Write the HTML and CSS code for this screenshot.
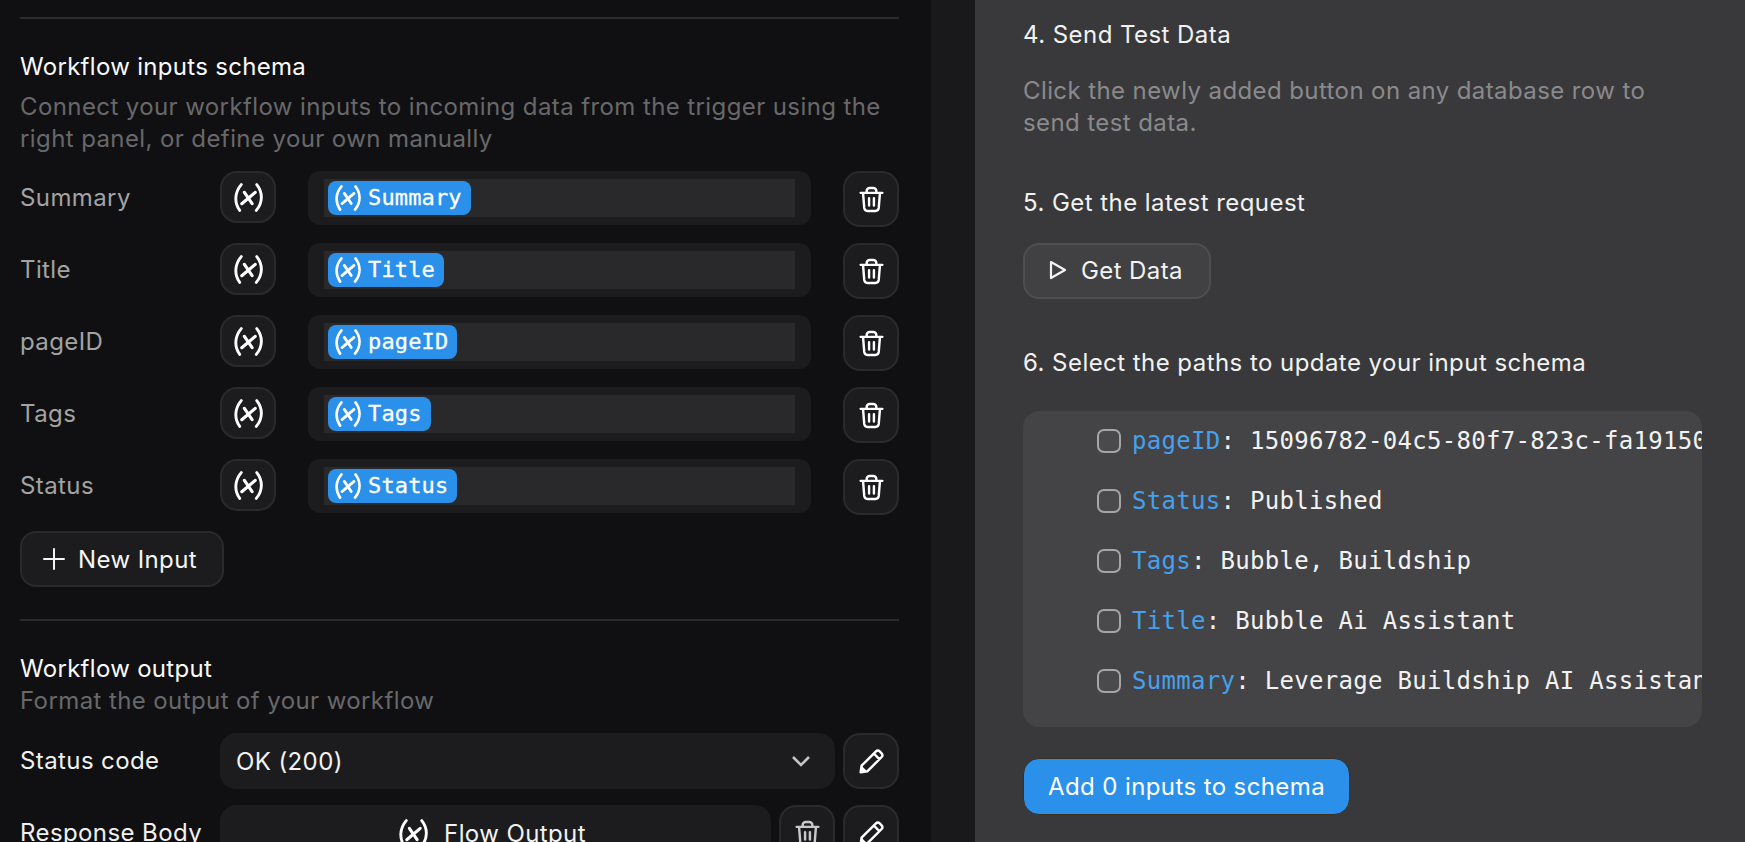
FILE: index.html
```html
<!DOCTYPE html>
<html lang="en">
<head>
    <meta charset="UTF-8">
    <title>Workflow inputs schema</title>
    <link rel="stylesheet" href="styles.css">
</head>
<body>
    <svg class="defs" width="0" height="0">
        <symbol id="trash" viewBox="0 0 24 24">
            <path d="M3 6.500h18M8 6.500V5a2.500 2.500 0 0 1 2.500-2.500h3A2.500 2.500 0 0 1 16 5v1.500M5 6.500l1 12.500a2.800 2.800 0 0 0 2.800 2.500h6.400a2.800 2.800 0 0 0 2.800-2.500l1-12.500M10 11v6M14 11v6" fill="none" stroke="currentColor" stroke-width="2" stroke-linecap="round" stroke-linejoin="round"/>
        </symbol>
        <symbol id="pencil" viewBox="0 0 24 24">
            <path d="M3 21l.8-5.500L15.500 3.800a2.500 2.500 0 0 1 3.500 0l1.200 1.200a2.500 2.500 0 0 1 0 3.500L8.500 20.200z M14 5.500l4.500 4.500" fill="none" stroke="currentColor" stroke-width="2" stroke-linejoin="round"/>
            <path d="M3 21l.8-5.500 4.700 4.700z" fill="currentColor"/>
        </symbol>
        <symbol id="variable" viewBox="0 0 30 28">
            <path d="M8 1.500C1.500 9 1 19 6.500 26.500M23 1.500C29 9 29 19 22.500 26.500" fill="none" stroke="currentColor" stroke-width="2.800" stroke-linecap="round"/>
            <path d="M11 9l7.500 11M21.500 9L8.500 20" fill="none" stroke="currentColor" stroke-width="3" stroke-linecap="round"/>
        </symbol>
    </svg>

    <div class="app">
        <section class="left">
            <hr class="rule rule-top">
            <h2 class="title title-first">Workflow inputs schema</h2>
            <p class="sub">Connect your workflow inputs to incoming data from the trigger using the right panel, or define your own manually</p>

            <div class="rows">
                <div class="row">
                    <span class="label">Summary</span>
                    <button class="icon-btn var-btn"><svg class="var-ico"><use href="#variable"/></svg></button>
                    <div class="field"><div class="field-inner"><span class="chip"><svg class="chip-ico"><use href="#variable"/></svg>Summary</span></div></div>
                    <button class="icon-btn"><svg class="ico"><use href="#trash"/></svg></button>
                </div>
                <div class="row">
                    <span class="label">Title</span>
                    <button class="icon-btn var-btn"><svg class="var-ico"><use href="#variable"/></svg></button>
                    <div class="field"><div class="field-inner"><span class="chip"><svg class="chip-ico"><use href="#variable"/></svg>Title</span></div></div>
                    <button class="icon-btn"><svg class="ico"><use href="#trash"/></svg></button>
                </div>
                <div class="row">
                    <span class="label">pageID</span>
                    <button class="icon-btn var-btn"><svg class="var-ico"><use href="#variable"/></svg></button>
                    <div class="field"><div class="field-inner"><span class="chip"><svg class="chip-ico"><use href="#variable"/></svg>pageID</span></div></div>
                    <button class="icon-btn"><svg class="ico"><use href="#trash"/></svg></button>
                </div>
                <div class="row">
                    <span class="label">Tags</span>
                    <button class="icon-btn var-btn"><svg class="var-ico"><use href="#variable"/></svg></button>
                    <div class="field"><div class="field-inner"><span class="chip"><svg class="chip-ico"><use href="#variable"/></svg>Tags</span></div></div>
                    <button class="icon-btn"><svg class="ico"><use href="#trash"/></svg></button>
                </div>
                <div class="row">
                    <span class="label">Status</span>
                    <button class="icon-btn var-btn"><svg class="var-ico"><use href="#variable"/></svg></button>
                    <div class="field"><div class="field-inner"><span class="chip"><svg class="chip-ico"><use href="#variable"/></svg>Status</span></div></div>
                    <button class="icon-btn"><svg class="ico"><use href="#trash"/></svg></button>
                </div>
            </div>

            <button class="new-input">
                <svg width="22" height="22" viewBox="0 0 22 22"><path d="M11 1v20M1 11h20" stroke="currentColor" stroke-width="2" stroke-linecap="round"/></svg>
                New Input
            </button>

            <hr class="rule rule-mid">
            <h2 class="title title-second">Workflow output</h2>
            <p class="sub sub-output">Format the output of your workflow</p>

            <div class="rows rows-output">
                <div class="row">
                    <span class="label label-light">Status code</span>
                    <div class="select">
                        <span>OK (200)</span>
                        <svg width="20" height="12" viewBox="0 0 20 12"><path d="M2 2l8 8 8-8" fill="none" stroke="#c4c4c4" stroke-width="2.600"/></svg>
                    </div>
                    <button class="icon-btn"><svg class="ico"><use href="#pencil"/></svg></button>
                </div>
                <div class="row">
                    <span class="label label-light">Response Body</span>
                    <div class="select select-center"><svg class="var-ico"><use href="#variable"/></svg><span>Flow Output</span></div>
                    <button class="icon-btn dim"><svg class="ico"><use href="#trash"/></svg></button>
                    <button class="icon-btn"><svg class="ico"><use href="#pencil"/></svg></button>
                </div>
            </div>
        </section>

        <div class="strip"></div>

        <section class="right">
            <h3 class="step step-4">4. Send Test Data</h3>
            <p class="note">Click the newly added button on any database row to send test data.</p>

            <h3 class="step step-5">5. Get the latest request</h3>
            <button class="get-data">
                <svg width="18" height="20" viewBox="0 0 18 20"><path d="M2 2l14 8-14 8z" fill="none" stroke="currentColor" stroke-width="2.200" stroke-linejoin="round"/></svg>
                Get Data
            </button>

            <h3 class="step step-6">6. Select the paths to update your input schema</h3>
            <div class="paths">
                <div class="path"><span class="check"></span><span class="key">pageID</span>: 15096782-04c5-80f7-823c-fa19150</div>
                <div class="path"><span class="check"></span><span class="key">Status</span>: Published</div>
                <div class="path"><span class="check"></span><span class="key">Tags</span>: Bubble, Buildship</div>
                <div class="path"><span class="check"></span><span class="key">Title</span>: Bubble Ai Assistant</div>
                <div class="path"><span class="check"></span><span class="key">Summary</span>: Leverage Buildship AI Assistant</div>
            </div>

            <button class="add-btn">Add 0 inputs to schema</button>
        </section>
    </div>
</body>
</html>
```

FILE: styles.css
```css
html, body {
    margin: 0;
    height: 100%;
    overflow: hidden;
}

body {
    font-family: Inter, "Noto Sans", sans-serif;
    letter-spacing: 0.4px;
    background-color: #101012;
    color: #f2f2f2;
}

.defs {
    position: absolute;
}

button {
    font-family: inherit;
    letter-spacing: inherit;
    color: inherit;
    padding: 0;
}

.app {
    display: flex;
    height: 842px;
    overflow: hidden;
}

/* left panel */
.left {
    width: 879px;
    flex: none;
    padding: 17px 32px 0 20px;
    background-color: #101012;
}

.rule {
    margin: 0;
    border: none;
    height: 2px;
    background-color: #2b2b2d;
}

.title {
    margin: 0;
    font-size: 24px;
    line-height: 32px;
    font-weight: 400;
    letter-spacing: 0.3px;
    color: #fafafa;
}

.title-first {
    margin-top: 32px;
}

.title-second {
    margin-top: 32px;
}

.sub {
    margin: 8px 0 0;
    font-size: 24px;
    line-height: 32px;
    color: #68686a;
}

.sub-output {
    margin-top: 0;
}

.rows {
    display: flex;
    flex-direction: column;
    gap: 16px;
    margin-top: 16px;
}

.row {
    display: flex;
    align-items: flex-start;
    height: 56px;
    flex: none;
}

.label {
    width: 200px;
    flex: none;
    font-size: 24px;
    line-height: 54px;
    white-space: nowrap;
    color: #a3a3a3;
}

.label-light {
    color: #f0f0f0;
    line-height: 56px;
}

.icon-btn {
    width: 56px;
    height: 56px;
    flex: none;
    box-sizing: border-box;
    display: flex;
    align-items: center;
    justify-content: center;
    background-color: #1c1c1e;
    border: 2px solid #2a2a2c;
    border-radius: 17px;
    color: #fff;
}

.icon-btn.var-btn {
    height: 52px;
}

.icon-btn.dim {
    color: #c8c8c8;
    margin-right: 8px;
}

.ico {
    width: 29px;
    height: 29px;
}

.var-ico {
    width: 31px;
    height: 29px;
    flex: none;
    color: #fff;
}

.chip-ico {
    width: 28px;
    height: 26px;
    flex: none;
}

.field {
    width: 503px;
    height: 54px;
    flex: none;
    box-sizing: border-box;
    margin: 0 32px;
    padding: 8px 16px;
    background-color: #1c1c1e;
    border-radius: 12px;
}

.field-inner {
    height: 38px;
    display: flex;
    align-items: center;
    padding-left: 4px;
    background-color: #29292b;
}

.chip {
    display: flex;
    align-items: center;
    gap: 6px;
    height: 34px;
    padding: 0 9px 0 6px;
    background-color: #2b90ea;
    border-radius: 8px;
    color: #fff;
    font-family: "DejaVu Sans Mono", monospace;
    font-size: 22px;
    letter-spacing: 0.15px;
    line-height: 32px;
    -webkit-text-stroke: 0.3px #fff;
}

.new-input {
    display: flex;
    align-items: center;
    gap: 13px;
    width: 204px;
    height: 56px;
    margin-top: 16px;
    box-sizing: border-box;
    padding-left: 21px;
    background-color: #1c1c1e;
    border: 2px solid #2a2a2c;
    border-radius: 16px;
    font-size: 24px;
    color: #f5f5f5;
}

.rule-mid {
    margin-top: 32px;
}

.select {
    display: flex;
    align-items: center;
    justify-content: space-between;
    box-sizing: border-box;
    width: 615px;
    height: 56px;
    flex: none;
    margin-right: 8px;
    padding: 0 24px 0 16px;
    background-color: #1c1c1e;
    border-radius: 16px;
    font-size: 24px;
    color: #f2f2f2;
}

.select-center {
    width: 551px;
    justify-content: center;
    gap: 15px;
    padding: 0 7px 0 0;
}

/* middle strip and right panel */
.strip {
    width: 44px;
    flex: none;
    background-color: #19191b;
}

.right {
    flex: 1;
    min-width: 0;
    padding: 0 43px 0 48px;
    background-color: #39393b;
}

.step {
    margin: 0;
    font-size: 24px;
    line-height: 32px;
    font-weight: 400;
    letter-spacing: 0.45px;
    color: #f2f2f2;
}

.step-4 {
    margin-top: 19px;
}

.step-5 {
    margin-top: 48px;
}

.step-6 {
    margin-top: 48px;
}

.note {
    margin: 24px 0 0;
    font-size: 24px;
    line-height: 32px;
    color: #8a8a8c;
}

.get-data {
    display: flex;
    align-items: center;
    gap: 14px;
    width: 188px;
    height: 56px;
    margin-top: 24px;
    box-sizing: border-box;
    padding: 0 0 2px 24px;
    background-color: #414143;
    border: 2px solid #4e4e50;
    border-radius: 16px;
    font-size: 24px;
    color: #f2f2f2;
}

.paths {
    margin-top: 32px;
    height: 316px;
    box-sizing: border-box;
    padding: 0 0 0 74px;
    background-color: #444446;
    border-radius: 16px;
    overflow: hidden;
}

.path {
    display: flex;
    align-items: center;
    height: 60px;
    white-space: pre;
    font-family: "DejaVu Sans Mono", monospace;
    font-size: 24px;
    letter-spacing: 0.3px;
    color: #f2f2f2;
}

.check {
    width: 24px;
    height: 24px;
    flex: none;
    box-sizing: border-box;
    margin-right: 11px;
    background-color: #4a4a4c;
    border: 2px solid #a5a5a5;
    border-radius: 7px;
}

.key {
    color: #46a0ec;
}

.add-btn {
    display: block;
    width: 327px;
    height: 57px;
    margin-top: 31px;
    background-color: #2b90ea;
    border: 1px solid #3b2f20;
    border-radius: 16px;
    font-size: 24px;
    color: #fff;
}
```
